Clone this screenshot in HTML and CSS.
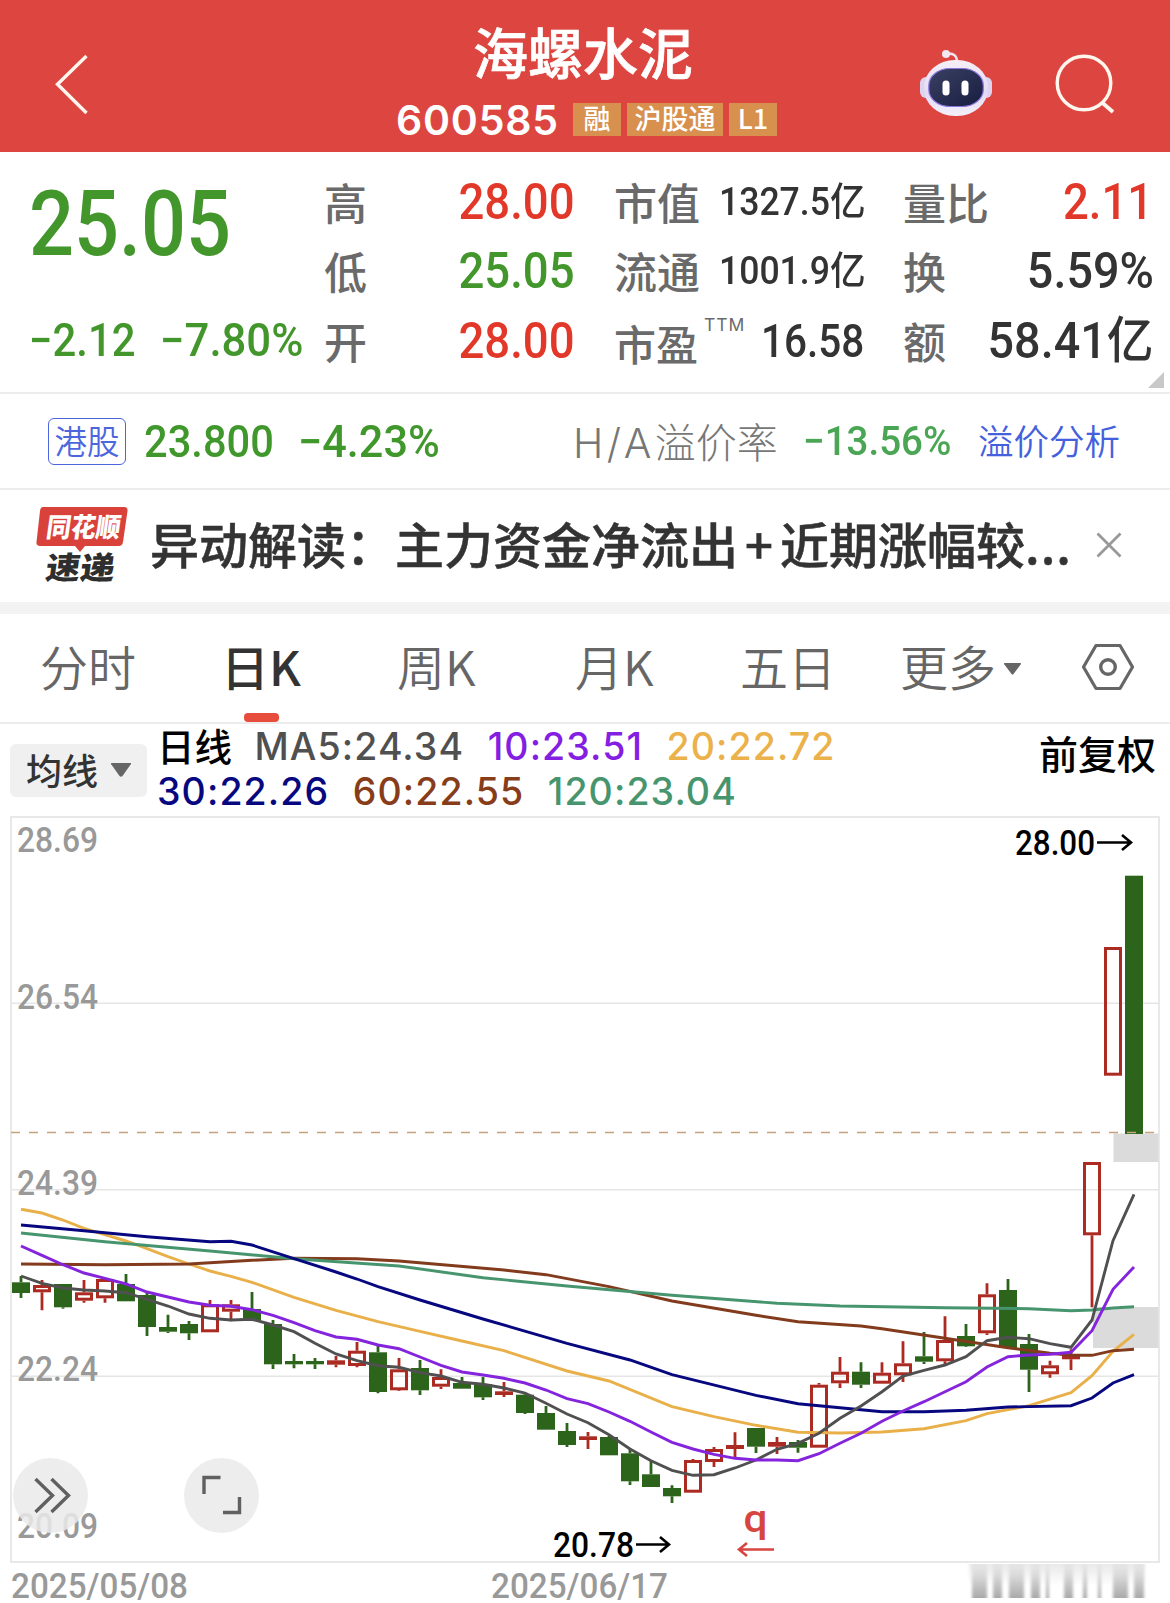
FILE: index.html
```html
<!DOCTYPE html>
<html lang="zh-CN">
<head>
<meta charset="utf-8">
<title>海螺水泥 600585</title>
<link rel="stylesheet" href="styles.css">
</head>
<body>
<header class="topbar">
  <svg class="back" width="40" height="64" viewBox="0 0 40 64"><path d="M33.5 4 4.5 32.300 33.500 61" fill="none" stroke="#fff6ee" stroke-width="3.400"/></svg>
  <div class="heading">
    <h1 class="name">海螺水泥</h1>
    <div class="code-row">
      <span class="code">600585</span>
      <span class="tag">融</span><span class="tag tag-wide">沪股通</span><span class="tag">L1</span>
    </div>
  </div>
  <div class="actions">
    <svg width="76" height="72" viewBox="0 0 76 72">
      <defs>
        <linearGradient id="shell" x1="0" y1="0" x2="0" y2="1"><stop offset="0" stop-color="#f6eff6"/><stop offset=".6" stop-color="#e3daf3"/><stop offset="1" stop-color="#f3f1fb"/></linearGradient>
        <linearGradient id="visor" x1="0" y1="0" x2="1" y2="1"><stop offset="0" stop-color="#3a4163"/><stop offset="1" stop-color="#171d40"/></linearGradient>
      </defs>
      <path d="M28 6q11-2 11 8" fill="none" stroke="#eee3ee" stroke-width="2.600"/>
      <circle cx="28" cy="6" r="4" fill="#f3e9f1"/>
      <rect x="2" y="29" width="12" height="21" rx="6" fill="#ddd3f0"/>
      <rect x="62" y="29" width="12" height="21" rx="6" fill="#ddd3f0"/>
      <rect x="6" y="12" width="64" height="56" rx="31" ry="27" fill="url(#shell)"/>
      <rect x="10.800" y="20.500" width="54.500" height="38" rx="21" ry="17" fill="url(#visor)" stroke="#8a76de" stroke-width="1.200"/>
      <rect x="24.500" y="32.500" width="7" height="15" rx="3.500" fill="#fff"/>
      <rect x="43.500" y="32.500" width="7" height="15" rx="3.500" fill="#fff"/>
    </svg>
    <svg width="64" height="64" viewBox="0 0 64 64"><ellipse cx="31" cy="31" rx="26.800" ry="26.800" fill="none" stroke="#fff6ee" stroke-width="3.400"/><path d="M49 50.500 60 60" stroke="#fff6ee" stroke-width="3.800"/></svg>
  </div>
</header>

<section class="quote">
  <div class="col col-price">
    <div class="price"><span class="num">25.05</span></div>
    <div class="change"><span class="num">−2.12</span><span class="num pct">−7.80%</span></div>
  </div>
  <dl class="col">
    <div class="cell"><dt>高</dt><dd class="num up">28.00</dd></div>
    <div class="cell"><dt>低</dt><dd class="num down">25.05</dd></div>
    <div class="cell"><dt>开</dt><dd class="num up">28.00</dd></div>
  </dl>
  <dl class="col">
    <div class="cell"><dt>市值</dt><dd class="num small">1327.5亿</dd></div>
    <div class="cell"><dt>流通</dt><dd class="num small">1001.9亿</dd></div>
    <div class="cell cell-pe"><dt>市盈<sup>TTM</sup></dt><dd class="num mid">16.58</dd></div>
  </dl>
  <dl class="col">
    <div class="cell"><dt>量比</dt><dd class="num up ratio">2.11</dd></div>
    <div class="cell"><dt>换</dt><dd class="num wide">5.59%</dd></div>
    <div class="cell"><dt>额</dt><dd class="num wide">58.41亿</dd></div>
  </dl>
  <i class="corner"></i>
</section>

<section class="premium">
  <span class="hk">港股</span>
  <span class="num hk-price">23.800</span>
  <span class="num hk-change">−4.23%</span>
  <span class="ha"><span class="ha-latin">H/A</span>溢价率</span>
  <span class="num ha-rate">−13.56%</span>
  <a class="link">溢价分析</a>
</section>

<section class="news">
  <svg class="brand" width="94" height="80" viewBox="0 0 94 80">
    <path d="M8 3H89q4 0 3.500 4L88 38q-.6 4-4.500 4H50l-5 6-5-6H5q-4 0-3.500-4L5 7q.5-4 3-4z" fill="#d8423b"/>
    <g class="brand-text" transform="skewX(-8)">
      <text x="15" y="33" font-size="27" textLength="74" lengthAdjust="spacingAndGlyphs" fill="#fff">同花顺</text>
      <text x="20" y="75" font-size="31" textLength="69" lengthAdjust="spacingAndGlyphs" fill="#2e2e2e">速递</text>
    </g>
  </svg>
  <p class="headline">异动解读：主力资金净流出<span class="plus">+</span>近期涨幅较<span class="dots">...</span></p>
  <svg class="close" width="26" height="26" viewBox="0 0 26 26"><path d="M1.500 1.500 24.500 24.500M24.500 1.500 1.500 24.500" stroke="#999" stroke-width="2.800"/></svg>
</section>

<nav class="tabs">
  <a class="tab">分时</a>
  <a class="tab active"><span>日K</span></a>
  <a class="tab">周K</a>
  <a class="tab">月K</a>
  <a class="tab">五日</a>
  <a class="tab more">更多<svg width="19" height="14" viewBox="0 0 19 14"><path d="M1.500 1h16q1 0 .3 1.200L10.500 12q-1 1.200-2 0L1.200 2.200Q.5 1 1.500 1z" fill="#666"/></svg></a>
  <svg class="gear" width="54" height="50" viewBox="0 0 54 50"><path d="M15 3.500H39L51.500 25 39 46.500H15L2.500 25z" fill="none" stroke="#666" stroke-width="3.200" stroke-linejoin="round"/><circle cx="27" cy="25" r="7.300" fill="none" stroke="#666" stroke-width="3.400"/></svg>
</nav>

<section class="legend">
  <button class="ma-button">均线<svg width="22" height="16" viewBox="0 0 22 16"><path d="M1.500 1h19q1 0 .3 1.200L12.500 14q-1.500 1.500-3 0L1.200 2.200Q.5 1 1.500 1z" fill="#666"/></svg></button>
  <div class="ma-lines">
    <div class="ma-row"><span class="period">日线</span><span class="ma5">MA5:24.34</span><span class="ma10">10:23.51</span><span class="ma20">20:22.72</span></div>
    <div class="ma-row"><span class="ma30">30:22.26</span><span class="ma60">60:22.55</span><span class="ma120">120:23.04</span></div>
  </div>
  <span class="adjust">前复权</span>
</section>

<svg id="chart" class="chart" width="1170" height="793" viewBox="0 810 1170 793"></svg>
<script src="chart.js"></script>
</body>
</html>
```
FILE: styles.css
```css
* { box-sizing: border-box; }
body {
  margin: 0;
  width: 1170px;
  height: 1603px;
  overflow: hidden;
  background: #fff;
  font-family: "Noto Sans CJK SC", sans-serif;
  color: #333;
  white-space: nowrap;
}
h1, p, dl, dd { margin: 0; }

.num {
  display: inline-block;
  font-family: Roboto, "Noto Sans CJK SC", sans-serif;
  font-weight: 500;
  transform: scaleX(.91);
  transform-origin: left center;
}
.up { color: #e23829; }
.down { color: #43962c; }

.topbar {
  height: 152px;
  background: #dd4540;
  color: #fff;
  display: grid;
  grid-template-columns: 396px 522px 252px;
}
.back { margin: 52px 0 0 53px; }
.name {
  margin: 19px 0 0 77px;
  font-size: 55px;
  line-height: 62px;
  font-weight: 500;
  -webkit-text-stroke: .7px #fff;
}
.code-row { display: flex; align-items: center; margin-top: 20px; height: 37px; }
.code {
  width: 177px;
  font: 600 41px/36px Inter, sans-serif;
  letter-spacing: .8px;
}
.tag {
  width: 48px;
  height: 33px;
  margin-right: 6px;
  background: #d8904f;
  font-size: 27px;
  line-height: 29px;
  font-weight: 500;
  text-align: center;
}
.tag-wide { width: 96px; }
.actions { display: flex; gap: 59px; padding-top: 48px; }
.actions svg:last-child { margin-top: 4px; }

.quote {
  position: relative;
  display: grid;
  grid-template-columns: 293px 290px 289px 251px;
  height: 242px;
  padding: 15px 0 0 31px;
  border-bottom: 2px solid #ececec;
}
.col-price { color: #43962c; }
.price { height: 139px; font-size: 90px; line-height: 96px; margin-left: -2px; padding-top: 1px; }
.price .num { transform: scaleX(.88); }
.change { display: flex; height: 70px; font-size: 45.500px; line-height: 69px; margin-left: -2px; }
.change .num { width: 131px; transform: scaleX(.92); }
.change .pct { transform: scaleX(.96); }
.cell {
  display: flex;
  justify-content: space-between;
  align-items: center;
  height: 69.500px;
  width: 251px;
}
dt { font-size: 43px; line-height: 60px; font-weight: 500; color: #6a6a6a; padding-bottom: 2px; }
dd.num { font-size: 50px; line-height: 60px; transform-origin: right center; }
dd.small { font-size: 38.500px; transform: scaleX(.925); margin-right: -1px; }
dd.mid { font-size: 46px; transform: scaleX(.88); margin-right: 1px; }
dd.wide { transform: scaleX(.935); }
dd.ratio { margin-right: 1px; }
.cell-pe dt { font-size: 42px; padding: 4px 0 0; }
sup {
  margin-left: 6px;
  font: 400 17.500px/18px Inter, sans-serif;
  letter-spacing: 1px;
  position: relative;
  top: -10px;
  vertical-align: 20px;
}
.corner {
  position: absolute;
  right: 6px;
  bottom: 4px;
  border: 8.500px solid transparent;
  border-right-color: #c8c8c8;
  border-bottom-color: #c8c8c8;
}

.premium {
  display: grid;
  grid-template-columns: 96px 154px 275px 230px 175px 190px;
  align-items: center;
  height: 96px;
  padding-left: 48px;
  border-bottom: 2px solid #ececec;
  font-size: 45px;
}
.hk {
  width: 78px;
  height: 47px;
  border: 1.500px solid #4c66dd;
  border-radius: 6px;
  color: #4c66dd;
  font-size: 32.500px;
  line-height: 41px;
  font-weight: 350;
  text-align: center;
}
.hk-price, .hk-change { color: #40982c; }
.hk-price { transform: scaleX(.925); }
.hk-change { transform: scaleX(.96); }
.ha { font-size: 41px; font-weight: 300; color: #777; line-height: 56px; }
.ha-latin { font-family: Inter, sans-serif; letter-spacing: 3.500px; }
.ha-rate { font-size: 41px; color: #4aa654; transform: scaleX(.94); }
.link { font-size: 35.500px; font-weight: 350; color: #4560dd; line-height: 56px; padding-bottom: 3px; }

.news {
  display: grid;
  grid-template-columns: 115px 946px 60px;
  height: 124px;
  padding: 12px 0 0 35px;
  border-bottom: 12px solid #f3f3f3;
}
.brand { margin-top: 2px; overflow: visible; }
.brand-text { font-weight: 900; }
.headline { font-size: 49px; line-height: 82px; font-weight: 500; -webkit-text-stroke: .5px #333; }
.plus { display: inline-block; width: 42px; text-align: center; }
.dots { letter-spacing: 1px; }
.close { margin-top: 30px; }

.tabs {
  display: grid;
  grid-template-columns: 184px 173px 178px 165px 160px 183px 60px;
  height: 110px;
  padding-left: 40px;
  border-bottom: 2px solid #ececec;
  font-size: 48px;
  line-height: 102px;
  font-weight: 350;
  color: #666;
}
.active { position: relative; font-weight: 500; color: #333; }
.active span { margin-left: -3px; }
.active::after {
  content: "";
  position: absolute;
  left: 20px;
  bottom: 0;
  width: 35px;
  height: 9px;
  border-radius: 4px;
  background: #e84c3d;
}
.more svg { margin: 0 0 10px 7px; }
.gear { margin: 28px 0 0 -2px; }

.legend {
  display: grid;
  grid-template-columns: 147px 882px 120px;
  height: 86px;
  padding-left: 10px;
}
.ma-button {
  display: flex;
  align-items: center;
  width: 137px;
  height: 53px;
  margin-top: 20px;
  padding: 0 0 4px 16px;
  gap: 12px;
  border: 0;
  border-radius: 6px;
  background: #f0f0f0;
  font: 500 36px/50px "Noto Sans CJK SC", sans-serif;
  color: #333;
}
.ma-button svg { margin-top: 3px; }
.ma-row {
  display: flex;
  height: 45px;
  font: 550 37.500px/45px Inter, sans-serif;
  letter-spacing: 1.100px;
}
.ma-row span + span { margin-left: 23.500px; }
.period { width: 74px; font-family: "Noto Sans CJK SC", sans-serif; line-height: 41px; letter-spacing: 0; color: #000; }
.ma-row .ma5 { color: #505050; font-weight: 500; }
.ma10 { color: #841ee2; }
.ma20 { color: #ebb14a; }
.ma30 { color: #07077f; }
.ma60 { color: #873d1a; }
.ma120 { color: #47956e; }
.adjust { font-size: 39px; line-height: 56px; font-weight: 500; color: #000; }

.chart { display: block; font-family: Roboto, sans-serif; font-weight: 500; }
.axis-text { fill: #999; font-size: 35.500px; }
.mark-text { fill: #000; font-size: 35.500px; }
```
FILE: chart.js
```js
const chart = document.getElementById('chart');
const STEP = 21;

// Candle bands: y = top + value / 3. Row: [rising, high, body top, body bottom, low].
const candleBands = [
  { top: 1180, rows: [
    [0,288,307,339,354],[1,300,315,337,391],[0,312,312,382,386],[1,300,337,362,368],[1,296,297,355,368],
    [0,282,312,364,364],[0,338,345,441,468],[0,404,441,455,459],[0,423,432,460,480],[1,360,373,457,457],
    [1,360,373,395,424],[0,336,387,421,421],[0,420,432,553,567],[0,522,543,553,565],[0,534,543,553,567],
    [1,528,541,554,562],[1,486,512,558,562],[0,498,517,636,640]] },
  { top: 1240, rows: [
    [1,354,388,451,453],[0,360,384,451,465],[1,388,411,440,447],[0,411,429,446,446],[0,411,432,472,480],
    [1,426,454,465,471],[0,462,464,519,522],[0,498,519,569,569],[0,549,573,615,621],[1,576,589,600,627],
    [0,588,591,646,646],[0,626,640,724,735],[0,660,703,741,741],[0,736,744,769,789],[1,657,660,758,758],
    [1,621,627,666,681],[1,577,615,627,654],[0,564,564,620,639],[1,591,606,620,642]] },
  { top: 1120, rows: [
    [0,960,966,983,998],[1,789,794,983,983],[1,711,755,790,804],[0,727,755,794,804],[1,727,758,791,791],
    [1,664,730,766,786],[0,636,709,725,732],[1,589,660,724,738],[0,612,648,679,681],[1,490,523,640,645],
    [0,477,510,684,687],[0,642,672,749,816],[1,722,736,763,773],[1,688,704,718,750],[1,126,126,346,562],
    [1,-519,-519,-133,-133],[0,-733,-733,42,42]] }
];

// Moving averages: per band, pairs of [day index, value].
const averages = [
  { color: '#e9b04a', bands: [
    [1180, [[0,88],[1,99],[2,120],[3,145],[5,183],[6,206],[7,230],[8,252],[9,273],[10,289],[11,307],[13,352],[15,391],[17,425]]],
    [1240, [[19,274],[21,303],[23,332],[26,393],[28,423],[31,500],[33,530],[35,556]]],
    [1120, [[37,937],[39,939],[41,936],[43,926],[45,902],[46,881],[48,857],[50,818],[51,767],[52,694],[53,643]]]] },
  { color: '#823b1c', bands: [
    [1180, [[0,252],[4,254],[8,252],[11,241],[13,235],[16,236],[18,243]]],
    [1240, [[23,90],[25,104],[28,140],[31,183],[35,226]]],
    [1120, [[37,605],[40,618],[41,626],[44,655],[47,683],[49,700],[50,706],[51,706],[52,692],[53,688]]]] },
  { color: '#47956e', bands: [
    [1180, [[0,159],[4,185],[9,213],[13,236],[18,258]]],
    [1240, [[22,113],[26,138],[31,166],[36,190]]],
    [1120, [[39,558],[44,563],[48,566],[50,572],[51,570],[52,564],[53,560]]]] },
  { color: '#07077f', bands: [
    [1180, [[0,135],[3,152],[6,170],[9,185],[10,184],[11,195],[13,236],[15,276],[16,297],[17,320]]],
    [1240, [[19,180],[22,237],[26,310],[29,360],[31,404],[35,466]]],
    [1120, [[37,851],[41,875],[43,875],[45,871],[47,861],[50,857],[51,834],[52,789],[53,764]]]] },
  { color: '#505050', bands: [
    [1180, [[0,288],[1,310],[2,324],[3,330],[4,333],[5,338],[6,358],[7,378],[8,402],[9,415],[10,420],[11,418],[12,435],[13,455],[14,490],[15,522],[16,542],[17,557],[18,562]]],
    [1240, [[19,398],[20,408],[21,427],[22,433],[23,444],[24,459],[25,490],[26,522],[27,548],[28,584],[29,627],[30,662],[31,691],[32,706],[33,704],[34,684],[35,660],[36,628]]],
    [1120, [[37,970],[38,940],[39,895],[40,858],[41,815],[42,768],[43,751],[44,735],[45,710],[46,662],[47,652],[48,656],[49,671],[50,682],[51,600],[52,362],[53,223]]]] },
  { color: '#8424dc', bands: [
    [1180, [[0,198],[1,226],[2,254],[3,279],[4,295],[5,312],[6,336],[7,351],[8,366],[9,376],[10,379],[11,389],[12,406],[13,428],[14,452],[15,471],[16,478],[17,495]]],
    [1240, [[18,326],[19,351],[20,376],[21,396],[22,405],[23,415],[24,429],[25,450],[26,476],[27,491],[28,516],[29,544],[30,576],[31,607],[32,627],[33,643],[34,655],[35,660],[36,660]]],
    [1120, [[37,1022],[38,1001],[39,970],[40,940],[41,904],[42,873],[43,845],[44,815],[45,785],[46,741],[47,710],[48,705],[49,703],[50,697],[51,632],[52,508],[53,441]]]] }
];

const dayX = i => STEP * (i + 1);
const text = (x, y, width, label, cls) =>
  `<text class="${cls}" x="${x}" y="${y}" textLength="${width}" lengthAdjust="spacingAndGlyphs">${label}</text>`;

let out = `<defs>
  <linearGradient id="fade" x1="0" y1="0" x2="0" y2="1"><stop offset="0" stop-color="#dcdcdc" stop-opacity=".4"/><stop offset=".45" stop-color="#d2d2d2"/><stop offset="1" stop-color="#a9a9a9"/></linearGradient>
  <linearGradient id="veil" x1="0" y1="0" x2="0" y2="1"><stop offset="0" stop-color="#e9e9e9"/><stop offset="1" stop-color="#fff"/></linearGradient>
  <filter id="soft"><feGaussianBlur stdDeviation="1.6 .4"/></filter></defs>`;

// Frame, grid and last-price line
out += '<rect x="11" y="817" width="1148" height="745" fill="none" stroke="#e8e8e8" stroke-width="2"/>';
for (const y of [1003.3, 1189.7, 1376.3]) out += `<path d="M11 ${y}H1159" stroke="#e6e6e6" stroke-width="1.500"/>`;
out += '<rect x="1113.500" y="1133.500" width="45" height="28.500" fill="#dbdbdb"/><rect x="1093" y="1307" width="65.500" height="41" fill="#dbdbdb"/>';

out += text(17, 852, 81, '28.69', 'axis-text') + text(17, 1008.500, 81, '26.54', 'axis-text') +
  text(17, 1195, 81, '24.39', 'axis-text') + text(17, 1381, 81, '22.24', 'axis-text') + text(17, 1538, 81, '20.09', 'axis-text') +
  text(11, 1597.500, 177, '2025/05/08', 'axis-text') + text(491, 1597.500, 177, '2025/06/17', 'axis-text');

let day = 0;
for (const band of candleBands) {
  for (const [rising, ...vals] of band.rows) {
    const [high, open, close, low] = vals.map(v => +(band.top + v / 3).toFixed(1));
    const x = dayX(day++);
    const color = rising ? '#ab2a22' : '#2b641a';
    out += `<path d="M${x} ${high}V${open}M${x} ${close}V${low}" stroke="${color}" stroke-width="2.800"/>`;
    out += rising && close - open > 6
      ? `<rect x="${x - 7.5}" y="${open + 1.5}" width="15" height="${close - open - 3}" fill="none" stroke="${color}" stroke-width="3"/>`
      : `<rect x="${x - 9}" y="${open}" width="18" height="${close - open}" fill="${color}"/>`;
  }
}

for (const { color, bands } of averages) {
  const pts = bands.flatMap(([top, list]) => list.map(([i, v]) => `${dayX(i)},${(top + v / 3).toFixed(1)}`));
  out += `<polyline points="${pts.join(' ')}" fill="none" stroke="${color}" stroke-width="2.900"/>`;
}
out += '<path d="M11 1132.500H1159" stroke="#c4a27c" stroke-width="1.500" stroke-dasharray="9 9"/>';

// High and low callouts
out += text(1015, 855, 80, '28.00', 'mark-text') + text(553, 1557, 81, '20.78', 'mark-text');
out += '<path d="M1097 842.500H1130M1122 835l9 7.500-9 7.500M636 1544.500H668M660 1537l9 7.500-9 7.500" fill="none" stroke="#000" stroke-width="2.600"/>';
out += '<text x="743.500" y="1532" font-size="39" textLength="24" lengthAdjust="spacingAndGlyphs" fill="#d6453f">q</text>';
out += '<path d="M774 1549.500H739M747 1543l-8 6.500 8 6.500" fill="none" stroke="#d6453f" stroke-width="2.600"/>';

// Floating tools
out += '<g fill="#eaeaea" fill-opacity=".85"><circle cx="50.500" cy="1495.500" r="37.500"/><circle cx="221.500" cy="1495.500" r="37.500"/></g>';
out += '<path d="M35.500 1479l17 16.500-17 16.500M51.500 1479l17 16.500-17 16.500M204 1494V1477.500H220.500M223 1512.500H239.500V1497" fill="none" stroke="#606060" stroke-width="3.400"/>';

// Obscured date
out += '<rect x="969" y="1564" width="176" height="22" fill="url(#veil)" filter="url(#soft)"/><g fill="url(#fade)" filter="url(#soft)">';
for (const [x, w] of [[972,15],[993,9],[1009,15],[1031,9],[1046,3],[1064,9],[1083,4],[1098,3],[1113,15],[1134,10]])
  out += `<rect x="${x}" y="1564" width="${w}" height="34"/>`;
out += '</g>';

chart.innerHTML = out;
```
